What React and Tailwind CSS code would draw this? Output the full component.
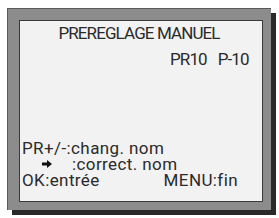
import React from "react";

function Arrow() {
  return (
    <svg width="10" height="8" viewBox="0 0 10 8" className="block">
      <path d="M0 2.6 H5 V0 L10 4 L5 8 V5.4 H0 Z" fill="#111" />
    </svg>
  );
}

export default function App() {
  return (
    <div className="w-[279px] h-[218px] bg-white pl-[7px] pt-[8px]">
      <div className="w-[264px] h-[202px] bg-[#8c8c8c] border-t border-l border-[#5a5a5a] shadow-[5px_5px_0_#2a2a2a] pl-[11px] pt-[11px]">
        <div
          className="w-[244px] h-[182px] bg-[#f2f2f2] border border-[#3a3a3a] flex flex-col text-[#2a2a2a] pb-[13px] font-['Roboto',sans-serif]"
        >
          <div className="text-[17px] leading-[18px] mt-[3px] text-center pr-[4px] tracking-[-0.9px]">PREREGLAGE MANUEL</div>
          <div className="text-[17px] leading-[18px] mt-[8px] flex pl-[150px] gap-[11px] tracking-[-0.9px]">
            <span>PR10</span>
            <span>P-10</span>
          </div>
          <div className="flex-1" />
          <div className="text-[17px] leading-[16px] pl-[2px] tracking-[0.4px]">PR+/-:chang. nom</div>
          <div className="text-[17px] leading-[16px] pl-[22px] tracking-[0.4px] flex items-center">
            <Arrow />
            <span className="ml-[20px]">:correct. nom</span>
          </div>
          <div className="text-[17px] leading-[16px] pl-[2px] pr-[24px] tracking-[0.4px] flex justify-between">
            <span>OK:entrée</span>
            <span>MENU:fin</span>
          </div>
        </div>
      </div>
    </div>
  );
}
